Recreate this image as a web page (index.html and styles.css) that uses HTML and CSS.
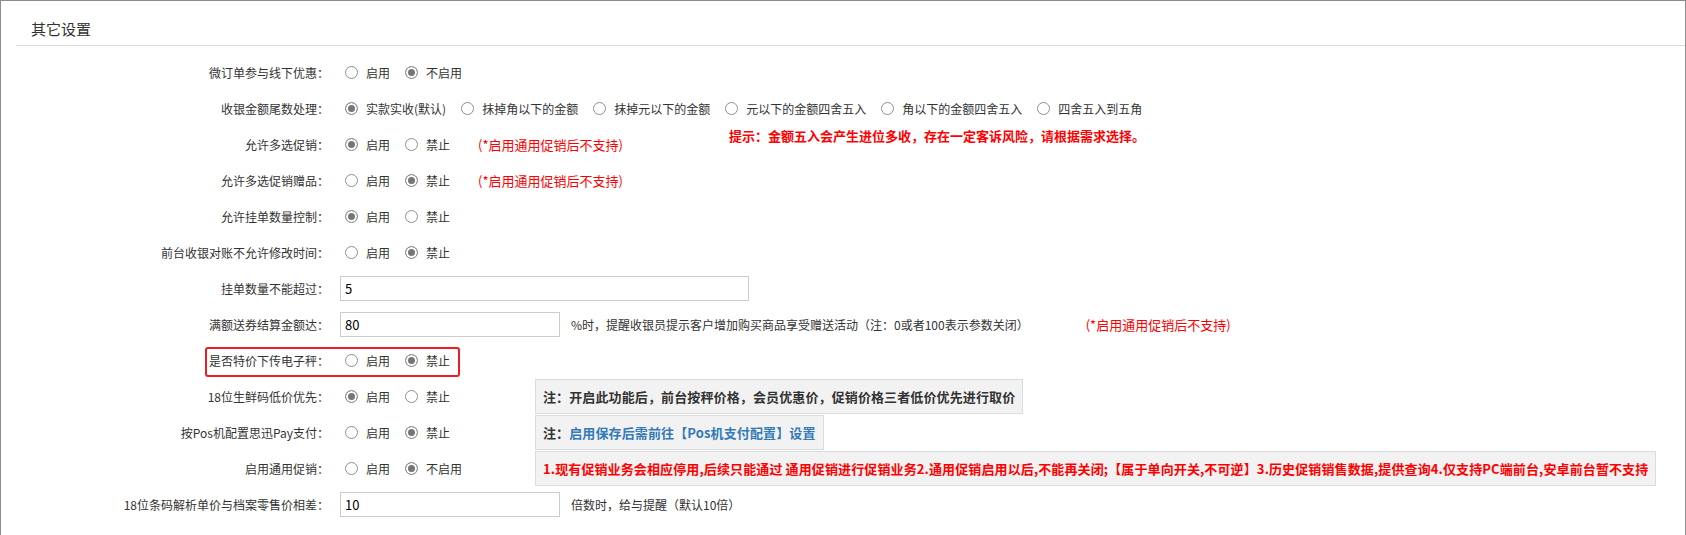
FILE: index.html
```html
<!DOCTYPE html>
<html lang="zh-CN">
<head>
  <meta charset="UTF-8">
  <title>其它设置</title>
  <link rel="stylesheet" href="styles.css">
</head>
<body>
  <div class="panel">
    <div class="panel-title">其它设置</div>

    <div class="form">
      <!-- 微订单 -->
      <div class="row">
        <div class="label">微订单参与线下优惠：</div>
        <div class="ctrl">
          <label class="opt"><input type="radio" name="r1"><span>启用</span></label>
          <label class="opt"><input type="radio" name="r1" checked><span>不启用</span></label>
        </div>
      </div>

      <!-- 尾数处理 -->
      <div class="row has-hint">
        <div class="label">收银金额尾数处理：</div>
        <div class="ctrl">
          <label class="opt"><input type="radio" name="r2" checked><span>实款实收(默认)</span></label>
          <label class="opt"><input type="radio" name="r2"><span>抹掉角以下的金额</span></label>
          <label class="opt"><input type="radio" name="r2"><span>抹掉元以下的金额</span></label>
          <label class="opt"><input type="radio" name="r2"><span>元以下的金额四舍五入</span></label>
          <label class="opt"><input type="radio" name="r2"><span>角以下的金额四舍五入</span></label>
          <label class="opt"><input type="radio" name="r2"><span>四舍五入到五角</span></label>
        </div>
        <div class="hint">提示：金额五入会产生进位多收，存在一定客诉风险，请根据需求选择。</div>
      </div>

      <div class="row">
        <div class="label">允许多选促销：</div>
        <div class="ctrl">
          <label class="opt"><input type="radio" name="r3" checked><span>启用</span></label>
          <label class="opt"><input type="radio" name="r3"><span>禁止</span></label>
          <span class="warn">(*启用通用促销后不支持)</span>
        </div>
      </div>

      <div class="row">
        <div class="label">允许多选促销赠品：</div>
        <div class="ctrl">
          <label class="opt"><input type="radio" name="r4"><span>启用</span></label>
          <label class="opt"><input type="radio" name="r4" checked><span>禁止</span></label>
          <span class="warn">(*启用通用促销后不支持)</span>
        </div>
      </div>

      <div class="row">
        <div class="label">允许挂单数量控制：</div>
        <div class="ctrl">
          <label class="opt"><input type="radio" name="r5" checked><span>启用</span></label>
          <label class="opt"><input type="radio" name="r5"><span>禁止</span></label>
        </div>
      </div>

      <div class="row">
        <div class="label">前台收银对账不允许修改时间：</div>
        <div class="ctrl">
          <label class="opt"><input type="radio" name="r6"><span>启用</span></label>
          <label class="opt"><input type="radio" name="r6" checked><span>禁止</span></label>
        </div>
      </div>

      <div class="row">
        <div class="label">挂单数量不能超过：</div>
        <div class="ctrl">
          <input class="text-input wide" type="text" value="5">
        </div>
      </div>

      <div class="row">
        <div class="label">满额送券结算金额达：</div>
        <div class="ctrl">
          <input class="text-input" type="text" value="80">
          <span class="after">%时，提醒收银员提示客户增加购买商品享受赠送活动（注：0或者100表示参数关闭）</span>
          <span class="warn far">(*启用通用促销后不支持)</span>
        </div>
      </div>

      <!-- 标注框 -->
      <div class="row marked">
        <div class="label">是否特价下传电子秤：</div>
        <div class="ctrl">
          <label class="opt"><input type="radio" name="r9"><span>启用</span></label>
          <label class="opt"><input type="radio" name="r9" checked><span>禁止</span></label>
        </div>
        <div class="mark"></div>
      </div>

      <div class="row">
        <div class="label">18位生鲜码低价优先：</div>
        <div class="ctrl">
          <div class="radios">
            <label class="opt"><input type="radio" name="r10" checked><span>启用</span></label>
            <label class="opt"><input type="radio" name="r10"><span>禁止</span></label>
          </div>
          <div class="note">注：开启此功能后，前台按秤价格，会员优惠价，促销价格三者低价优先进行取价</div>
        </div>
      </div>

      <div class="row">
        <div class="label">按Pos机配置思迅Pay支付：</div>
        <div class="ctrl">
          <div class="radios">
            <label class="opt"><input type="radio" name="r11"><span>启用</span></label>
            <label class="opt"><input type="radio" name="r11" checked><span>禁止</span></label>
          </div>
          <div class="note">注：<span class="blue">启用保存后需前往【Pos机支付配置】设置</span></div>
        </div>
      </div>

      <div class="row">
        <div class="label">启用通用促销：</div>
        <div class="ctrl">
          <div class="radios">
            <label class="opt"><input type="radio" name="r12"><span>启用</span></label>
            <label class="opt"><input type="radio" name="r12" checked><span>不启用</span></label>
          </div>
          <div class="note red">1.现有促销业务会相应停用,后续只能通过 通用促销进行促销业务2.通用促销启用以后,不能再关闭;【属于单向开关,不可逆】3.历史促销销售数据,提供查询4.仅支持PC端前台,安卓前台暂不支持</div>
        </div>
      </div>

      <div class="row">
        <div class="label">18位条码解析单价与档案零售价相差：</div>
        <div class="ctrl">
          <input class="text-input" type="text" value="10">
          <span class="after">倍数时，给与提醒（默认10倍）</span>
        </div>
      </div>
    </div>
  </div>
</body>
</html>
```

FILE: styles.css
```css
body {
  margin: 0;
  padding: 0;
  background: #fff;
  color: #333;
  font-family: "Noto Sans CJK SC", "Noto Sans", sans-serif;
  font-size: 12px;
  overflow: hidden;
}

.panel {
  border: 1px solid #8c8c8c;
  border-bottom: none;
  height: 100vh;
  box-sizing: border-box;
  overflow: hidden;
}

.panel-title {
  margin-left: 15px;
  padding: 18px 0 0 15px;
  height: 26px;
  line-height: 20px;
  font-size: 15px;
  color: #333;
  border-bottom: 1px solid #ddd;
}

.form {
  padding-top: 8px;
}

/* 每一行 */
.row {
  display: flex;
  align-items: center;
  height: 36px;
  position: relative;
}
.label {
  width: 328px;
  margin-right: 11px;
  text-align: right;
  white-space: nowrap;
  flex-shrink: 0;
}
.ctrl {
  display: flex;
  align-items: center;
  white-space: nowrap;
  height: 100%;
}
.radios {
  display: flex;
  align-items: center;
  width: 195px;
  flex-shrink: 0;
}

/* 单选 */
.opt {
  display: inline-flex;
  align-items: center;
  margin-right: 10px;
  cursor: pointer;
}
.opt input {
  appearance: none;
  -webkit-appearance: none;
  width: 13px;
  height: 13px;
  margin: 0 8px 0 5px;
  border: 1px solid #8f8f8f;
  border-radius: 50%;
  background: #fff;
  box-sizing: border-box;
}
.opt input:checked {
  background: #767676;
  box-shadow: inset 0 0 0 2px #fff;
}

.warn {
  color: #f00;
  font-size: 13px;
  margin-left: 18px;
}
.warn.far {
  margin-left: 57px;
}

.hint {
  position: absolute;
  left: 728px;
  top: 100%;
  margin-top: 1px;
  line-height: 18px;
  color: #f00;
  font-size: 13px;
  font-weight: bold;
  white-space: nowrap;
}

/* 输入框 */
.text-input {
  width: 220px;
  height: 25px;
  box-sizing: border-box;
  border: 1px solid #ccc;
  padding: 0 4px;
  font-family: "Noto Sans CJK SC", "Noto Sans", sans-serif;
  font-size: 13px;
  color: #000;
  outline: none;
}
.text-input.wide {
  width: 409px;
}
.after {
  margin-left: 11px;
}

/* 红色标注框 */
.mark {
  position: absolute;
  left: 204px;
  top: 5px;
  width: 255px;
  height: 30px;
  box-sizing: border-box;
  border: 2px solid #ee1c24;
  border-radius: 3px;
  pointer-events: none;
}

/* 提示块 */
.note {
  display: flex;
  align-items: center;
  height: 35px;
  box-sizing: border-box;
  padding: 0 7px;
  background: #f2f2f2;
  border: 1px solid #dcdcdc;
  font-size: 13px;
  font-weight: bold;
  letter-spacing: 0.12px;
  color: #333;
}
.note .blue {
  color: #337ab7;
}
.note.red {
  color: #f00;
}
```
